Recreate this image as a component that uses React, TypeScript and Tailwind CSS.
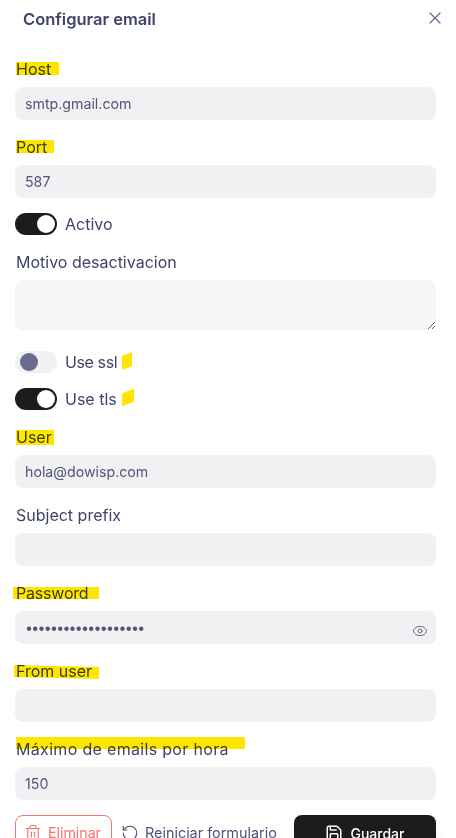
import React from "react";
import { X, Eye, Trash2, RotateCcw, Save } from "lucide-react";

const FONT = "font-['Inter','Noto_Sans',sans-serif]";

function Label({ children, markClass, textClass = "" }: { children: React.ReactNode; markClass?: string; textClass?: string }) {
  return (
    <div className="relative h-6 mb-[6px] text-[16px] leading-6 text-[#3f4468]">
      {markClass && <span className={"absolute bg-[#ffe600] " + markClass} />}
      <span className={"relative mix-blend-multiply pl-[1px] " + textClass}>{children}</span>
    </div>
  );
}

function Field({ value, type = "text", className = "" }: { value?: string; type?: string; className?: string }) {
  return (
    <input
      readOnly
      type={type}
      value={value ?? ""}
      className={"block w-full h-[33px] rounded-lg bg-[#f1f1f4] px-[10px] text-[14.2px] text-[#4f5478] outline-none " + className}
    />
  );
}

function Toggle({ on, label, markClass, textClass = "" }: { on: boolean; label: string; markClass?: string; textClass?: string }) {
  return (
    <div className="relative flex items-center gap-2 h-[22px]">
      {on ? (
        <div className="w-[42px] h-[22px] rounded-full bg-[#1c1c1c] flex items-center justify-end pr-[2px]">
          <div className="w-[18px] h-[18px] rounded-full bg-white" />
        </div>
      ) : (
        <div className="w-[42px] h-[22px] rounded-full bg-[#f1f1f4] flex items-center pl-[5px]">
          <div className="w-[18px] h-[18px] rounded-full bg-[#696b8c]" />
        </div>
      )}
      <span className={"text-[16px] text-[#3f4468] " + textClass}>{label}</span>
      {markClass && <span className={"absolute bg-[#ffe600] -skew-y-[20deg] " + markClass} />}
    </div>
  );
}

export default function App() {
  return (
    <div className={"w-[456px] h-[838px] overflow-hidden bg-white pl-[15px] pr-[20px] relative " + FONT}>
      <div className="flex items-center justify-between h-[38px] pl-2">
        <span className="text-[16.5px] font-semibold text-[#3f4468]">Configurar email</span>
        <X size={20} strokeWidth={1.5} className="text-[#696b8c] -mr-[9px] -mt-[2px]" />
      </div>

      <div className="mt-[19px]">
        <Label markClass="left-[1px] top-[5px] w-[43px] h-[13px]">Host</Label>
        <Field value="smtp.gmail.com" />
      </div>
      <div className="mt-[15px]">
        <Label markClass="left-[1px] top-[5px] w-[38px] h-[13px]">Port</Label>
        <Field value="587" />
      </div>

      <div className="mt-[15px]">
        <Toggle on label="Activo" />
      </div>

      <div className="mt-[15px]">
        <Label>Motivo desactivacion</Label>
        <textarea
          readOnly
          className="block w-full h-[50px] rounded-lg bg-[#f6f6f8] outline-none resize-y"
        />
      </div>

      <div className="mt-[21px]">
        <Toggle on={false} label="Use ssl" textClass="tracking-[-0.4px]" markClass="left-[107px] top-[3px] w-[10px] h-[14px]" />
      </div>
      <div className="mt-[15px]">
        <Toggle on label="Use tls" markClass="left-[107px] top-[3px] w-[12px] h-[13px]" />
      </div>

      <div className="mt-[15px]">
        <Label markClass="left-[1px] top-[5px] w-[38px] h-[15px]">User</Label>
        <Field value="hola@dowisp.com" />
      </div>
      <div className="mt-[15px]">
        <Label>Subject prefix</Label>
        <Field />
      </div>
      <div className="mt-[15px]">
        <Label markClass="-left-[2px] top-[6px] w-[86px] h-[12px]" textClass="tracking-[-0.2px]">Password</Label>
        <div className="relative">
          <Field value="aaaaaaaaaaaaaaaaaaa" type="password" className="tracking-[-1.75px] text-[#3f4468]" />
          <Eye size={16} strokeWidth={1.5} className="absolute right-2 top-[12px] text-[#696b8c]" />
        </div>
      </div>
      <div className="mt-[15px]">
        <Label markClass="-left-[1px] top-[7px] w-[85px] h-[12px] rotate-[1.5deg]">From user</Label>
        <Field />
      </div>
      <div className="mt-[15px]">
        <Label markClass="left-[1px] top-0 w-[229px] h-[12px]" textClass="tracking-[0.32px]">
          Máximo de emails por hora
        </Label>
        <Field value="150" />
      </div>

      <div className="mt-[15px] flex items-start">
        <div className="h-[36px] w-[97px] shrink-0 rounded-lg border border-[#f87171] flex items-center gap-[6px] pl-[8px] text-[14.2px] text-[#f87171]">
          <Trash2 size={18} strokeWidth={1.5} />
          Eliminar
        </div>
        <div className="h-[36px] flex items-center gap-[6px] ml-[9px] text-[14.4px] text-[#4f5478] whitespace-nowrap">
          <RotateCcw size={18} strokeWidth={1.5} />
          Reiniciar formulario
        </div>
        <div className="ml-auto h-[36px] w-[142px] shrink-0 rounded-lg bg-[#1c1c1c] shadow-lg flex items-center justify-center gap-[7px] text-[14px] font-medium text-white">
          <Save size={18} strokeWidth={2} />
          Guardar
        </div>
      </div>
    </div>
  );
}
